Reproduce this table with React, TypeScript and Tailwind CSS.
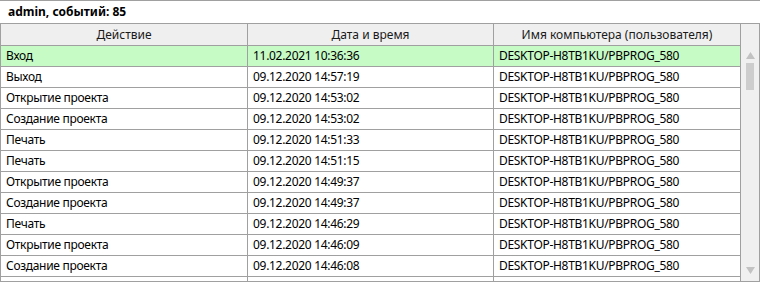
import React from "react";

const rows: [string, string][] = [
	["Вход", "11.02.2021 10:36:36"],
	["Выход", "09.12.2020 14:57:19"],
	["Открытие проекта", "09.12.2020 14:53:02"],
	["Создание проекта", "09.12.2020 14:53:02"],
	["Печать", "09.12.2020 14:51:33"],
	["Печать", "09.12.2020 14:51:15"],
	["Открытие проекта", "09.12.2020 14:49:37"],
	["Создание проекта", "09.12.2020 14:49:37"],
	["Печать", "09.12.2020 14:46:29"],
	["Открытие проекта", "09.12.2020 14:46:09"],
	["Создание проекта", "09.12.2020 14:46:08"],
];

const host = "DESKTOP-H8TB1KU/PBPROG_580";

export default function App() {
	return (
		<div
			className="w-[760px] h-[282px] overflow-hidden bg-white text-[12px] text-black border-t border-[#a0a0a0]"
			style={{ fontFamily: '"Noto Sans", "Open Sans", sans-serif' }}
		>
			{/* Title */}
			<div className="h-[22px] flex items-center pl-[8px] font-bold">admin, событий: 85</div>

			<div className="flex h-[259px] border-t border-l border-b border-[#a0a0a0]">
				{/* Grid */}
				<div className="w-[740px] flex flex-col overflow-hidden">
					<div className="flex h-[22px] shrink-0 bg-[#efefef] border-b border-[#a0a0a0] text-[#1a1a1a]">
						<div className="w-[247px] flex items-center justify-center border-r border-[#a0a0a0]">Действие</div>
						<div className="w-[246px] flex items-center justify-center border-r border-[#a0a0a0]">Дата и время</div>
						<div className="w-[247px] flex items-center justify-center border-r border-[#a0a0a0]">Имя компьютера (пользователя)</div>
					</div>
					{rows.map(([action, date], i) => (
						<div
							key={i}
							className={
								"flex h-[21px] shrink-0 border-b border-[#a0a0a0] tracking-[-0.3px] " +
								(i === 0 ? "bg-[#c6fbc6]" : "bg-white")
							}
						>
							<div className="w-[247px] flex items-center pl-[5px] border-r border-[#a0a0a0]">{action}</div>
							<div className="w-[246px] flex items-center pl-[5px] border-r border-[#a0a0a0]">{date}</div>
							<div className="w-[247px] flex items-center pl-[5px] border-r border-[#a0a0a0]">{host}</div>
						</div>
					))}
					{/* partially visible next row */}
					<div className="flex h-[21px] shrink-0 bg-white">
						<div className="w-[247px] border-r border-[#a0a0a0]" />
						<div className="w-[246px] border-r border-[#a0a0a0]" />
						<div className="w-[247px] border-r border-[#a0a0a0]" />
					</div>
				</div>

				{/* Scrollbar */}
				<div className="w-[19px] bg-[#f0f0f0] border-r border-[#a0a0a0] flex flex-col items-center">
					<svg width="9" height="7" viewBox="0 0 9 7" className="mt-[28px]">
						<polygon points="4.5,0 9,7 0,7" fill="#c2c2c2" />
					</svg>
					<div className="mt-[4px] w-[8px] h-[27px] bg-[#cdcdcd]" />
					<div className="flex-1" />
					<svg width="9" height="7" viewBox="0 0 9 7" className="mb-[7px]">
						<polygon points="0,0 9,0 4.5,7" fill="#c2c2c2" />
					</svg>
				</div>
			</div>
		</div>
	);
}
